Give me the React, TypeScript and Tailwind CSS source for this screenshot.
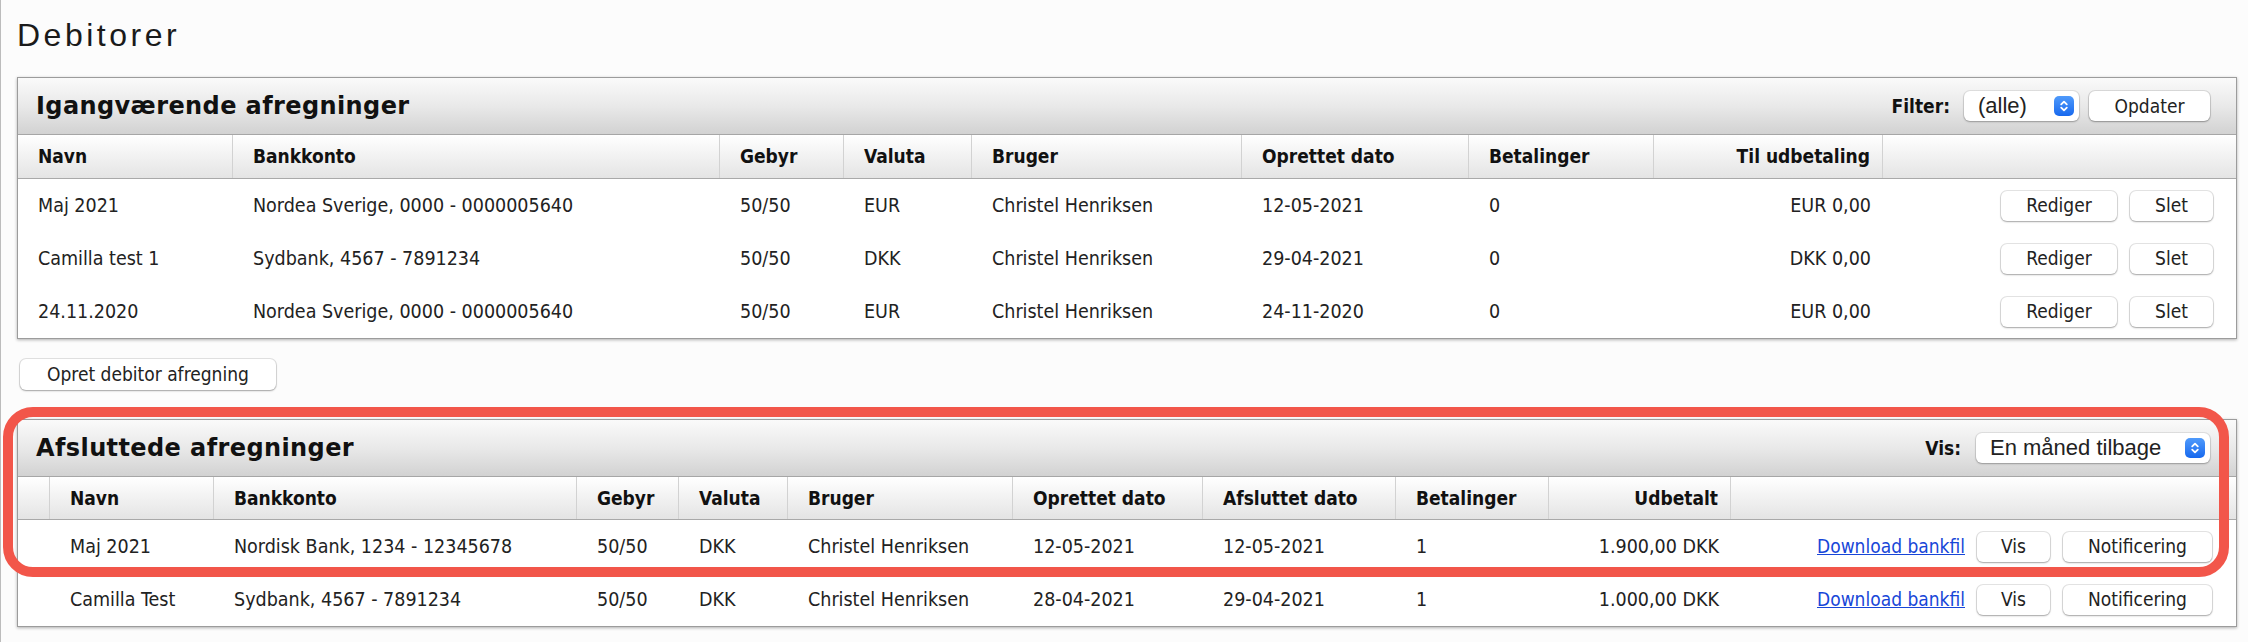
import clsx from 'clsx';
import type { ReactNode } from 'react';

const BODY = "font-['DejaVu_Sans_Condensed','Liberation_Sans',sans-serif]";
const SYS = "font-['Liberation_Sans','Helvetica',sans-serif]";

type Col = { label: string; right?: boolean };

const openCols: Col[] = [
  { label: 'Navn' },
  { label: 'Bankkonto' },
  { label: 'Gebyr' },
  { label: 'Valuta' },
  { label: 'Bruger' },
  { label: 'Oprettet dato' },
  { label: 'Betalinger' },
  { label: 'Til udbetaling', right: true },
  { label: '' },
];

const openRows = [
  ['Maj 2021', 'Nordea Sverige, 0000 - 0000005640', '50/50', 'EUR', 'Christel Henriksen', '12-05-2021', '0', 'EUR 0,00'],
  ['Camilla test 1', 'Sydbank, 4567 - 7891234', '50/50', 'DKK', 'Christel Henriksen', '29-04-2021', '0', 'DKK 0,00'],
  ['24.11.2020', 'Nordea Sverige, 0000 - 0000005640', '50/50', 'EUR', 'Christel Henriksen', '24-11-2020', '0', 'EUR 0,00'],
];

const closedCols: Col[] = [
  { label: '' },
  { label: 'Navn' },
  { label: 'Bankkonto' },
  { label: 'Gebyr' },
  { label: 'Valuta' },
  { label: 'Bruger' },
  { label: 'Oprettet dato' },
  { label: 'Afsluttet dato' },
  { label: 'Betalinger' },
  { label: 'Udbetalt', right: true },
  { label: '' },
];

const closedRows = [
  ['', 'Maj 2021', 'Nordisk Bank, 1234 - 12345678', '50/50', 'DKK', 'Christel Henriksen', '12-05-2021', '12-05-2021', '1', '1.900,00 DKK'],
  ['', 'Camilla Test', 'Sydbank, 4567 - 7891234', '50/50', 'DKK', 'Christel Henriksen', '28-04-2021', '29-04-2021', '1', '1.000,00 DKK'],
];

const OPEN_GRID = 'grid-cols-[215px_487px_124px_128px_270px_227px_185px_229px_1fr]';
const CLOSED_GRID = 'grid-cols-[32px_164px_363px_102px_109px_225px_190px_193px_153px_182px_1fr]';

function Btn({ children, className }: { children: ReactNode; className?: string }) {
  return (
    <button
      className={clsx(
        'h-[30px] rounded-[6px] bg-white text-[19px] text-[#222] shadow-[0_0_0_1px_rgba(0,0,0,0.1),0_1px_2px_rgba(0,0,0,0.28)]',
        className,
      )}
    >
      {children}
    </button>
  );
}

function Stepper() {
  return (
    <span className="flex h-[20px] w-[20px] shrink-0 items-center justify-center rounded-[5px] bg-linear-to-b from-[#4f9afb] to-[#1668ee]">
      <svg width="10" height="14" viewBox="0 0 10 14" fill="none" stroke="white" strokeWidth="1.8" strokeLinecap="round" strokeLinejoin="round">
        <path d="M2.2 5.4 5 2.6l2.8 2.8" />
        <path d="M2.2 8.6 5 11.4l2.8-2.8" />
      </svg>
    </span>
  );
}

function Select({ value, className }: { value: string; className?: string }) {
  return (
    <div
      className={clsx(
        'flex h-[30px] items-center justify-between rounded-[6px] bg-white pl-[14px] pr-[5px] text-[22px] text-[#222] shadow-[0_0_0_1px_rgba(0,0,0,0.08),0_1px_2px_rgba(0,0,0,0.25)]',
        SYS,
        className,
      )}
    >
      <span className="leading-none">{value}</span>
      <Stepper />
    </div>
  );
}

function PanelHead({ title, children }: { title: string; children: ReactNode }) {
  return (
    <div className="flex h-[57px] items-center justify-between border-b border-[#a6a6a6] bg-linear-to-b from-[#fafafa] via-[#e9e9e9] to-[#d2d2d2] pl-[18px] pr-[26px]">
      <h2 className="font-['DejaVu_Sans','Liberation_Sans',sans-serif] text-[24px] font-bold tracking-[0.4px] text-[#111]">{title}</h2>
      <div className="flex items-center">{children}</div>
    </div>
  );
}

function HeadRow({ cols, grid, h }: { cols: Col[]; grid: string; h: string }) {
  return (
    <div className={clsx('grid border-b border-[#a9a9a9] bg-linear-to-b from-white to-[#e4e4e4]', grid, h)}>
      {cols.map((c, i) => (
        <div
          key={i}
          className={clsx(
            'flex items-center text-[19px] font-bold text-[#111]',
            i < cols.length - 1 && 'border-r border-[#d2d2d2]',
            c.right ? 'justify-end pr-3' : 'pl-5',
          )}
        >
          {c.label}
        </div>
      ))}
    </div>
  );
}

export default function App() {
  return (
    <div className={clsx('min-h-[642px] border-l border-[#bcbcbc] bg-[#fcfcfc] pl-[16px] pr-[11px] pt-[19px] text-[#222]', BODY)}>
      <h1 className={clsx('mb-[26px] text-[32px] leading-[32px] tracking-[3.5px] text-[#1a1a1a]', SYS)}>Debitorer</h1>

      <section className="border border-[#9c9c9c] bg-white shadow-[0_1px_3px_rgba(0,0,0,0.3)]">
        <PanelHead title="Igangværende afregninger">
          <span className="mr-[14px] text-[19px] font-bold text-[#111]">Filter:</span>
          <Select value="(alle)" className="w-[115px]" />
          <Btn className="ml-[10px] w-[121px]">Opdater</Btn>
        </PanelHead>
        <HeadRow cols={openCols} grid={OPEN_GRID} h="h-[44px]" />
        {openRows.map((r, ri) => (
          <div key={ri} className={clsx('grid h-[53px] items-center text-[19.5px]', OPEN_GRID)}>
            {r.map((v, i) => (
              <div key={i} className={clsx('whitespace-nowrap', i === 7 ? 'pr-3 text-right' : 'pl-5')}>
                {v}
              </div>
            ))}
            <div className="flex justify-end gap-[13px] pr-[23px]">
              <Btn className="w-[116px]">Rediger</Btn>
              <Btn className="w-[83px]">Slet</Btn>
            </div>
          </div>
        ))}
      </section>

      <Btn className="ml-[3px] mt-[20px] h-[31px] px-[27px]">Opret debitor afregning</Btn>

      <div className="relative mt-[29px]">
        <section className="border border-[#9c9c9c] bg-white shadow-[0_1px_3px_rgba(0,0,0,0.3)]">
          <PanelHead title="Afsluttede afregninger">
            <span className="mr-[15px] text-[19px] font-bold text-[#111]">Vis:</span>
            <Select value="En måned tilbage" className="w-[234px]" />
          </PanelHead>
          <HeadRow cols={closedCols} grid={CLOSED_GRID} h="h-[43px]" />
          {closedRows.map((r, ri) => (
            <div key={ri} className={clsx('grid h-[53px] items-center text-[19.5px]', CLOSED_GRID)}>
              {r.map((v, i) => (
                <div key={i} className={clsx('whitespace-nowrap', i === 9 ? 'pr-3 text-right' : 'pl-5')}>
                  {v}
                </div>
              ))}
              <div className="flex items-center justify-end gap-[12px] pr-[24px]">
                <a href="#" className="text-[19px] text-[#1746d8] underline">Download bankfil</a>
                <Btn className="w-[73px]">Vis</Btn>
                <Btn className="ml-[1px] w-[149px]">Notificering</Btn>
              </div>
            </div>
          ))}
        </section>
        <div className="pointer-events-none absolute left-[-14px] right-[8px] top-[-12px] h-[170px] rounded-[30px] border-[10px] border-[#f2564a]" />
      </div>
    </div>
  );
}
